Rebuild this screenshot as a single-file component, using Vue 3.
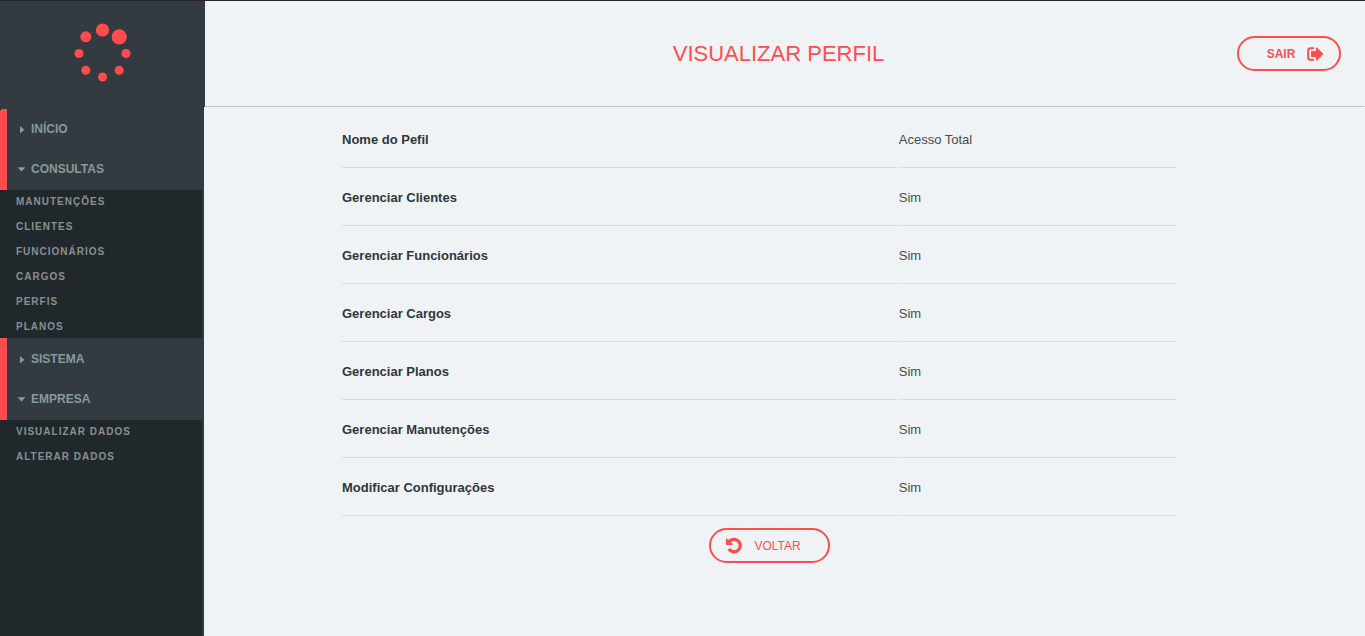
<script setup>
const logoDots = [
  { x: 28.5, y: 7, r: 6.6 },
  { x: 45.2, y: 13.8, r: 7.6 },
  { x: 52, y: 30.5, r: 4.5 },
  { x: 45.2, y: 47.2, r: 4.5 },
  { x: 28.5, y: 54, r: 4.5 },
  { x: 11.8, y: 47.2, r: 4.5 },
  { x: 5, y: 30.5, r: 4.5 },
  { x: 11.8, y: 13.8, r: 5.5 },
]

const menu = [
  {
    sections: [
      { label: 'INÍCIO', open: false },
      { label: 'CONSULTAS', open: true },
    ],
    links: ['MANUTENÇÕES', 'CLIENTES', 'FUNCIONÁRIOS', 'CARGOS', 'PERFIS', 'PLANOS'],
  },
  {
    sections: [
      { label: 'SISTEMA', open: false },
      { label: 'EMPRESA', open: true },
    ],
    links: ['VISUALIZAR DADOS', 'ALTERAR DADOS'],
  },
]

const profile = [
  ['Nome do Pefil', 'Acesso Total'],
  ['Gerenciar Clientes', 'Sim'],
  ['Gerenciar Funcionários', 'Sim'],
  ['Gerenciar Cargos', 'Sim'],
  ['Gerenciar Planos', 'Sim'],
  ['Gerenciar Manutenções', 'Sim'],
  ['Modificar Configurações', 'Sim'],
]
</script>

<template>
  <div class="page">
    <header class="top">
      <div class="brand">
        <svg class="logo" viewBox="0 0 57 60" aria-hidden="true">
          <circle v-for="(d, i) in logoDots" :key="i" :cx="d.x" :cy="d.y" :r="d.r" />
        </svg>
      </div>
      <div class="bar">
        <h1 class="title">VISUALIZAR PERFIL</h1>
        <button type="button" class="pill exit">
          SAIR
          <svg class="icon" viewBox="0 0 16 16" aria-hidden="true">
            <path d="M7 2.2H3.2Q1.2 2.2 1.2 4.2V11.8Q1.2 13.8 3.2 13.8H7" fill="none" stroke="currentColor" stroke-width="2" />
            <path d="M4 5H9V1.4H10L16.4 8L10 14.6H9V11H4Z" fill="currentColor" />
          </svg>
        </button>
      </div>
    </header>

    <div class="body">
      <nav class="side">
        <template v-for="(group, g) in menu" :key="g">
          <div class="sections">
            <button
              v-for="s in group.sections"
              :key="s.label"
              type="button"
              class="section"
              :aria-expanded="s.open"
            >
              <svg class="caret" viewBox="0 0 9 9" aria-hidden="true">
                <path v-if="s.open" d="M.6 2.2H8.4L4.5 6.4Z" />
                <path v-else d="M3 1V8.6L7.4 4.8Z" />
              </svg>
              {{ s.label }}
            </button>
          </div>
          <ul class="links">
            <li v-for="l in group.links" :key="l"><a href="#">{{ l }}</a></li>
          </ul>
        </template>
      </nav>

      <main class="content">
        <table class="data">
          <tbody>
            <tr v-for="row in profile" :key="row[0]">
              <th scope="row">{{ row[0] }}</th>
              <td>{{ row[1] }}</td>
            </tr>
          </tbody>
        </table>
        <div class="actions">
          <button type="button" class="pill back">
            <svg class="icon" viewBox="0 0 16 16" aria-hidden="true">
              <path d="M3.6 3.2A6.2 6.2 0 1 1 2.8 10.8" fill="none" stroke="currentColor" stroke-width="3.3" />
              <path d="M0 0L2 1.8L4.6 1.2L5 5L6.6 5.2V7H0Z" fill="currentColor" />
            </svg>
            VOLTAR
          </button>
        </div>
      </main>
    </div>
  </div>
</template>

<style>
body {
  margin: 0;
  background: #eff3f6;
}
</style>

<style scoped>
.page {
  display: flex;
  flex-direction: column;
  box-sizing: border-box;
  min-height: 100vh;
  border-top: 1px solid #272529;
  font-family: "Liberation Sans", Arial, sans-serif;
  color: #4a4a4a;
  background: #eff3f6;
}
.top {
  display: flex;
}
.brand {
  flex: none;
  box-sizing: border-box;
  width: 205px;
  padding: 22px 0 24px 74px;
  background: #333a40;
}
.logo {
  display: block;
  width: 57px;
  height: 60px;
  fill: #ff4d4d;
}
.bar {
  flex: 1;
  display: grid;
  grid-template-columns: 104px 1fr 104px;
  align-items: center;
  margin-right: 1px;
  padding: 0 23px 0 11px;
  border-bottom: 1px solid #bcc7d0;
}
.title {
  grid-column: 2;
  margin: 0;
  font-size: 22px;
  font-weight: 400;
  line-height: 26px;
  text-align: center;
  color: #ff4d4d;
}
.pill {
  display: flex;
  align-items: center;
  justify-content: center;
  gap: 12px;
  box-sizing: border-box;
  height: 35px;
  border: 2px solid #ff4d4d;
  border-radius: 18px;
  background: transparent;
  color: #ff4d4d;
  font-family: inherit;
  font-size: 12px;
  cursor: pointer;
}
.exit {
  padding: 0 16px 0 28px;
  font-weight: 700;
}
.actions {
  display: flex;
  justify-content: center;
  padding: 10px 0 0 20px;
}
.back {
  padding: 0 27px 0 15px;
}
.icon {
  flex: none;
  width: 16px;
  height: 16px;
  overflow: visible;
}
.body {
  flex: 1;
  display: flex;
}
.side {
  flex: none;
  box-sizing: border-box;
  width: 204px;
  border-top: 2px solid #333a40;
  border-right: 2px solid #333a40;
  background: #21282b;
}
.sections {
  padding: 1px 0;
  border-left: 7px solid #ff4d4d;
  background: #333a40;
}
.sections:first-child {
  padding-top: 0;
  border-top-left-radius: 3px;
}
.section {
  display: flex;
  align-items: center;
  gap: 5px;
  width: 100%;
  height: 40px;
  padding: 0 10px;
  border: 0;
  background: transparent;
  color: #869a9c;
  font-family: inherit;
  font-size: 12px;
  font-weight: 700;
  cursor: pointer;
}
.caret {
  width: 9px;
  height: 9px;
  fill: #9a9599;
}
.links {
  display: flex;
  flex-direction: column;
  gap: 2px;
  margin: 0;
  padding: 0 0 0 16px;
  list-style: none;
}
.links li {
  height: 23px;
  line-height: 23px;
  font-size: 10px;
}
.links a {
  color: #8a8f91;
  font-weight: 700;
  letter-spacing: 1px;
  text-decoration: none;
}
.content {
  flex: 1;
  padding: 3px 186px 24px 136px;
}
.data {
  width: 100%;
  border-spacing: 2px;
  table-layout: fixed;
  font-size: 13px;
  line-height: 15px;
}
.data th,
.data td {
  box-sizing: border-box;
  height: 56px;
  padding: 0;
  border-bottom: 1px solid #d8dde0;
  text-align: left;
}
.data th {
  width: 66.6%;
  color: #2f363a;
}
</style>
